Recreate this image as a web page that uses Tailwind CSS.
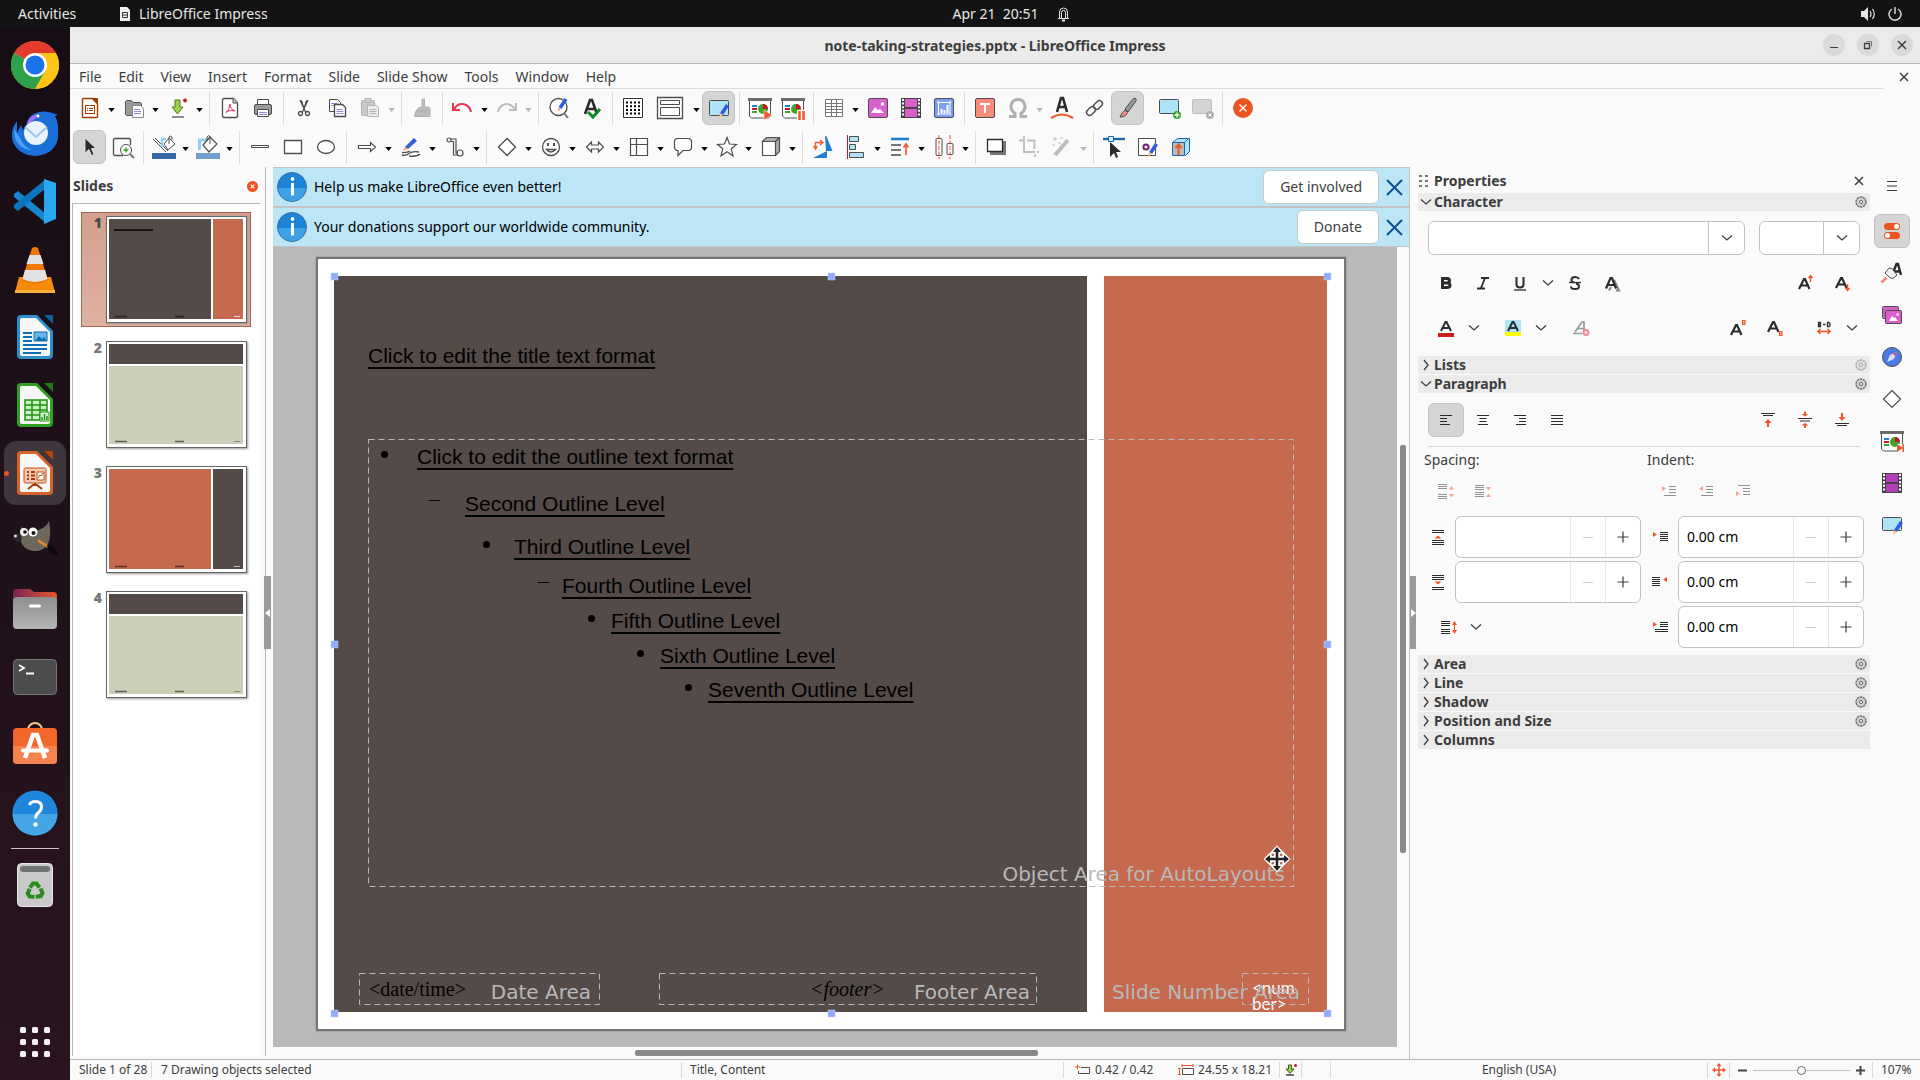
<!DOCTYPE html>
<html lang="en">
<head>
  <meta charset="UTF-8" />
  <meta name="viewport" content="width=device-width, initial-scale=1.0" />
  <title>note-taking-strategies.pptx - LibreOffice Impress</title>
  <script src="https://cdn.jsdelivr.net/npm/@tailwindcss/browser@4"></script>
</head>
<body class="h-screen flex flex-col overflow-hidden bg-[#fafafa] text-[#3d3d3d] text-[14px] leading-5 font-['Noto_Sans','Open_Sans',sans-serif]">

  <!-- Shared symbols -->
  <svg class="hidden">
    <symbol id="caret" viewBox="0 0 8 5"><path d="M0 0h8L4 5z" fill="currentColor"/></symbol>
    <symbol id="chev" viewBox="0 0 12 12"><path d="M1 3.500l5 4.500 5-4.500" fill="none" stroke="#3d3d3d" stroke-width="1.300"/></symbol>
    <symbol id="chevr" viewBox="0 0 12 12"><path d="M4 1l4 5-4 5" fill="none" stroke="#3d3d3d" stroke-width="1.300"/></symbol>
    <symbol id="x" viewBox="0 0 12 12"><path d="M2 2l8 8M10 2l-8 8" fill="none" stroke="currentColor" stroke-width="1.500"/></symbol>
    <symbol id="gear" viewBox="0 0 12 12"><circle cx="6" cy="6" r="5" fill="#cfcfcf" stroke="#6b6b6b" stroke-width="1.400" stroke-dasharray="2.4 0.7"/><circle cx="6" cy="6" r="1.600" fill="#eee" stroke="#6b6b6b"/></symbol>
    <symbol id="pencil" viewBox="0 0 12 16"><path d="M8 1l3 2-6 9-3-2z" fill="#2f5fe0"/><path d="M2 10l3 2-4 3z" fill="#f7b77a"/></symbol>
    <symbol id="board" viewBox="0 0 24 24"><path d="M0 2h24v3H0z" fill="#6b6b6b"/><path d="M1.500 5v15l2 2h17l2-2V5" fill="#fff" stroke="#4d4d4d"/><path d="M4 9h5v2H4z" fill="#1e7fd6"/><path d="M4 12h5v2H4z" fill="#c8142f"/><path d="M4 15h5v2H4z" fill="#3fa52a"/><circle cx="15" cy="13" r="5" fill="#3fa52a"/><path d="M15 13V8a5 5 0 0 1 5 5z" fill="#c8142f"/></symbol>
    <symbol id="film" viewBox="0 0 24 24"><path d="M2 2h20v20H2z" fill="#444"/><path d="M6 3h12v8H6zM6 13h12v8H6z" fill="var(--f)"/><path d="M4 3v18M20 3v18" stroke="#fff" stroke-width="2" stroke-dasharray="2 1.600"/></symbol>
  </svg>

  <!-- TOP BAR -->
  <header class="h-[27px] shrink-0 bg-[#131313] text-[#e6e6e6] grid grid-cols-3 items-center">
    <div class="flex items-center">
      <button class="pl-[18px] w-[119px] text-left">Activities</button>
      <svg class="w-3 h-4 mr-2" viewBox="0 0 12 16"><path d="M1 1h7l3 3v11H1z" fill="#f2f2f2"/><path d="M3.500 6.500h5v5h-5zM3.500 9h5" fill="none" stroke="#333"/></svg>
      <span>LibreOffice Impress</span>
    </div>
    <div class="flex items-center justify-center gap-[18px] pl-[102px]">
      <span class="whitespace-pre">Apr 21  20:51</span>
      <svg class="w-[13px] h-4" viewBox="0 0 13 16" fill="none" stroke="#e6e6e6"><path d="M1 12.500h11M2.500 12V6a4 4 0 0 1 8 0v6M4.500 12V6.500a2 2 0 0 1 4 0V12"/><path d="M5 14.500h3" stroke-width="2"/></svg>
    </div>
    <div class="flex items-center justify-end gap-3 pr-[18px]">
      <svg class="w-[15px] h-[14px]" viewBox="0 0 15 14"><path d="M0 4h3l4-4v14L3 10H0z" fill="#e6e6e6"/><path d="M9 4q2 3 0 6M11.500 2q3.500 5 0 10" fill="none" stroke="#e6e6e6" stroke-width="1.200"/></svg>
      <svg class="size-[14px]" viewBox="0 0 14 14" fill="none" stroke="#e6e6e6" stroke-width="1.400"><path d="M4 2a6 6 0 1 0 6 0M7 0v7"/></svg>
    </div>
  </header>

  <div class="flex-1 min-h-0 flex">

    <!-- DOCK -->
    <nav class="w-[70px] shrink-0 bg-[#1b0f17] bg-linear-to-b from-[#170d15] to-[#29141f] flex flex-col items-center pt-[5px] pb-[3px] [&>button]:w-[62px] [&>button]:h-16 [&>button]:mt-px [&>button]:mb-[3px] [&>button]:shrink-0 [&>button]:grid [&>button]:place-items-center [&>button>svg]:size-12">
      <button aria-label="Chrome"><svg viewBox="0 0 48 48"><circle cx="24" cy="24" r="24" fill="#fbbc05"/><path d="M24 24L3.200 12A24 24 0 0 1 44.800 12z" fill="#e33b2e"/><path d="M3.200 12A24 24 0 0 0 24 48l10.500-18z" fill="#2da14c"/><path d="M24 24l0-12h20.800A24 24 0 0 1 24 48l10.400-18z" fill="#fdc316"/><circle cx="24" cy="24" r="12" fill="#fff"/><circle cx="24" cy="24" r="9.500" fill="#1a73e8"/></svg></button>
      <button aria-label="Thunderbird"><svg viewBox="0 0 48 48"><path d="M6 12Q0 20 1 28a23 20 0 0 0 46-2q1-12-3-19l3-1Q34 0 25 4q-8 3-9 10l-4 7-2-5-4 8z" fill="#1a6fd8"/><path d="M16 14q3-8 12-9-3 4-10 10z" fill="#a46ff0"/><path d="M3 20q0 20 18 21-9-4-12-12z" fill="#4aa3f5"/><circle cx="25" cy="24" r="12" fill="#e8f3fc"/><path d="M14 18l11 10 11-10" fill="none" stroke="#9cc6ee" stroke-width="2"/><circle cx="27" cy="7" r="1.500" fill="#fff"/></svg></button>
      <button aria-label="Visual Studio Code"><svg viewBox="0 0 48 48"><path d="M3 17l4-3 28 23v9L3 20z" fill="#1687d0"/><path d="M3 31l4 3 28-23V2L3 28z" fill="#0a75bd"/><path d="M33 2l12 4v36l-12 5z" fill="#2ba6f0"/></svg></button>
      <button aria-label="VLC"><svg viewBox="0 0 48 48"><path d="M8 32h32l4 15H4z" fill="#f58a0b"/><path d="M4 45h40v3H4z" fill="#ffb03a"/><path d="M21 3q3-2 6 0l10 32q-13 8-26 0z" fill="#f07a00"/><path d="M18.500 10h11l3 9h-17zM14 25h20l2.500 9q-12.500 6-25 0z" fill="#e2e2e2"/></svg></button>
      <button aria-label="Writer"><svg viewBox="0 0 48 48"><path d="M10 2h16l16 16v24a4 4 0 0 1-4 4H10a4 4 0 0 1-4-4V6a4 4 0 0 1 4-4z" fill="#2b8fce"/><path d="M33 2h9v9z" fill="#0e6195"/><path d="M9 7q0-2 2-2h14l14 14v22q0 2-2 2H11q-2 0-2-2z" fill="#f6f6f6"/><path d="M12 20h9M12 24h9M12 28h9M12 32h24M12 36h24M12 40h18" stroke="#0d6fb0" stroke-width="2"/><path d="M23 19h13v9H23z" fill="#69b4e3" stroke="#0d6fb0"/><path d="M24 28l4-5 3 3 2-2 3 4z" fill="#0d6fb0"/></svg></button>
      <button aria-label="Calc"><svg viewBox="0 0 48 48"><path d="M10 2h16l16 16v24a4 4 0 0 1-4 4H10a4 4 0 0 1-4-4V6a4 4 0 0 1 4-4z" fill="#2fa01f"/><path d="M33 2h9v9z" fill="#1b7d10"/><path d="M9 7q0-2 2-2h14l14 14v22q0 2-2 2H11q-2 0-2-2z" fill="#f6f6f6"/><path d="M14 19h22v20H14zM14 24h22M14 29h22M14 34h22M21 19v20M29 19v20" fill="#c9efc2" stroke="#1f9210" stroke-width="1.500"/><path d="M29 31h9v9h-9z" fill="#d4f3ce" stroke="#1f9210"/><path d="M31 39v-3M33.500 39v-6M36 39v-4" stroke="#1f9210" stroke-width="1.500"/></svg></button>
      <button aria-label="Impress" class="relative rounded-xl bg-[#3f353d]"><span class="absolute left-0 size-[5px] rounded-full bg-[#e95420]"></span><svg viewBox="0 0 48 48"><path d="M10 2h16l16 16v24a4 4 0 0 1-4 4H10a4 4 0 0 1-4-4V6a4 4 0 0 1 4-4z" fill="#d9622b"/><path d="M33 2h9v9z" fill="#b0430f"/><path d="M9 7q0-2 2-2h14l14 14v22q0 2-2 2H11q-2 0-2-2z" fill="#f8f8f8"/><rect x="13" y="19" width="22" height="15" rx="1.500" fill="#f6c7ae" stroke="#c0501a"/><path d="M16 23h2M16 26.500h2M16 30h2M20 23h4M20 26.500h4M20 30h4" stroke="#a23c0b" stroke-width="1.800"/><path d="M26 23h7v8h-7zM27 29l2-3 1 1 2-3" fill="#fff" stroke="#c0501a"/><path d="M24 34v3M17 40l5-4h4l5 4" fill="none" stroke="#a23c0b" stroke-width="2"/></svg></button>
      <button aria-label="GIMP"><svg viewBox="0 0 48 48"><path d="M10 10q7 5 12 4Q34 13 38 4q3 14-1 23-5 8-15 7-10-2-12-9z" fill="#6e675b"/><path d="M2 18q4-4 8 0 2 6-2 7-6 0-6-7z" fill="#26282b"/><circle cx="13" cy="15" r="4" fill="#eee"/><circle cx="14" cy="15" r="1.800" fill="#111"/><circle cx="22" cy="15" r="4.500" fill="#fff"/><circle cx="22.500" cy="16" r="2" fill="#111"/><path d="M27 22l13 8-2 2-11-7z" fill="#e08a2c"/><path d="M36 28l4 0q6 4 8 11-8-2-11-6z" fill="#0b0b0b"/><circle cx="4.500" cy="19" r="1.500" fill="#ddd"/></svg></button>
      <button aria-label="Files"><svg viewBox="0 0 48 48"><defs><linearGradient id="g1"><stop offset="0" stop-color="#7a2453"/><stop offset="1" stop-color="#e8572a"/></linearGradient><linearGradient id="g2" x2="0" y2="1"><stop offset="0" stop-color="#8f8f8f"/><stop offset="1" stop-color="#b5b5b5"/></linearGradient></defs><path d="M2 8a4 4 0 0 1 4-4h13l4 3h19a4 4 0 0 1 4 4v9H2z" fill="url(#g1)"/><rect x="2" y="12" width="44" height="32" rx="4" fill="url(#g2)"/><path d="M19.500 21h9" stroke="#fff" stroke-width="3" stroke-linecap="round"/></svg></button>
      <button aria-label="Terminal"><svg viewBox="0 0 48 48"><rect x="2.500" y="6.500" width="43" height="35" rx="4" fill="#4c4c4c" stroke="#777"/><path d="M8 12l5 3-5 3M15 20.500h8" fill="none" stroke="#fff" stroke-width="1.800"/></svg></button>
      <button aria-label="Software"><svg viewBox="0 0 48 48"><path d="M17 9a7 7 0 0 1 14 0" fill="none" stroke="#f4c98d" stroke-width="2"/><rect x="2" y="7" width="44" height="36" rx="4" fill="#f2662a"/><path d="M2 25h44v14a4 4 0 0 1-4 4H6a4 4 0 0 1-4-4z" fill="#f58350"/><path d="M14 37l8-23h4l8 23" fill="none" stroke="#fff" stroke-width="4.500"/><path d="M12 29.500h24" stroke="#fff" stroke-width="4" stroke-linecap="round"/></svg></button>
      <button aria-label="Help"><svg viewBox="0 0 48 48"><circle cx="24" cy="24" r="22.500" fill="#1f86dc"/><path d="M1.500 25h45a22.500 21.500 0 0 1-45 0z" fill="#43a5e6"/><path d="M18.500 16q1-3.500 6-3.500 6 0 6 5.500 0 3-3 5.500-3 2.500-3 6" fill="none" stroke="#fff" stroke-width="3"/><circle cx="24.500" cy="35.500" r="2.300" fill="#fff"/></svg></button>
      <div class="w-12 h-px bg-[#c9c4c7] mb-[3px] shrink-0"></div>
      <button aria-label="Trash"><svg viewBox="0 0 48 48"><rect x="6.500" y="2.500" width="35" height="43" rx="4" fill="#c9c9c9" stroke="#e8e8e8"/><rect x="9" y="5" width="30" height="6" rx="3" fill="#6f7470"/><g transform="translate(24 30)" fill="none" stroke="#2b8a1f" stroke-width="4"><path d="M-5-3.500l3-4h3.500l3 4"/><path d="M-5-3.500l3-4h3.500l3 4" transform="rotate(120)"/><path d="M-5-3.500l3-4h3.500l3 4" transform="rotate(240)"/></g></svg></button>
      <button aria-label="Show Applications" class="mt-auto!"><svg viewBox="0 0 48 48" fill="#f2f2f2"><rect x="9" y="9" width="6" height="6" rx="1.500"/><rect x="21" y="9" width="6" height="6" rx="1.500"/><rect x="33" y="9" width="6" height="6" rx="1.500"/><rect x="9" y="21" width="6" height="6" rx="1.500"/><rect x="21" y="21" width="6" height="6" rx="1.500"/><rect x="33" y="21" width="6" height="6" rx="1.500"/><rect x="9" y="33" width="6" height="6" rx="1.500"/><rect x="21" y="33" width="6" height="6" rx="1.500"/><rect x="33" y="33" width="6" height="6" rx="1.500"/></svg></button>
    </nav>

    <!-- WINDOW -->
    <main class="flex-1 min-w-0 flex flex-col">

      <!-- Title bar -->
      <div class="h-[37px] shrink-0 bg-[#ebebeb] border-b border-[#b9b9b9] grid grid-cols-[1fr_auto_1fr] items-center">
        <h1 class="col-start-2 font-bold pt-px">note-taking-strategies.pptx - LibreOffice Impress</h1>
        <div class="flex justify-end gap-3 pr-[7px] [&>button]:size-[22px] [&>button]:rounded-full [&>button]:bg-[#dadada] [&>button]:grid [&>button]:place-items-center [&_svg]:size-3">
          <button aria-label="Minimize"><svg viewBox="0 0 12 12"><path d="M2 8.500h8" stroke="#3d3d3d"/></svg></button>
          <button aria-label="Restore"><svg viewBox="0 0 12 12" fill="none" stroke="#3d3d3d"><path d="M2.500 4.500h5v5h-5z" stroke-width="1.300"/><path d="M4.500 2.500h5v5" stroke="#777"/></svg></button>
          <button aria-label="Close"><svg><use href="#x"/></svg></button>
        </div>
      </div>

      <!-- Menu bar -->
      <div class="h-[25px] shrink-0 flex items-center justify-between pr-[10px]">
        <div class="flex-1 h-full border-b border-[#dcdcdc] flex items-center gap-[17px] pl-[9px] pt-px mr-[14px]">
          <button>File</button><button>Edit</button><button>View</button><button>Insert</button><button>Format</button><button>Slide</button><button>Slide Show</button><button>Tools</button><button>Window</button><button>Help</button>
        </div>
        <button aria-label="Close document"><svg class="size-3"><use href="#x"/></svg></button>
      </div>

      <!-- Standard toolbar -->
      <div class="h-[39px] shrink-0 flex items-center pl-[3px] pb-px text-black [&>button]:w-[33px] [&>button]:h-[34px] [&>button]:grid [&>button]:place-items-center [&>button]:shrink-0 [&>button>svg]:size-6 [&>.dd]:w-[11px] [&>.dd>svg]:w-[7px] [&>.dd>svg]:h-1 [&>.dd>svg]:mt-[3px] [&>i]:w-px [&>i]:h-[33px] [&>i]:ml-1 [&>i]:mr-[3px] [&>i]:bg-[#dcdcdc]">
        <button aria-label="New"><svg viewBox="0 0 24 24"><path d="M4.500 3.500q0-1 1-1h9l5 5v13q0 1-1 1h-13q-1 0-1-1z" fill="#fff" stroke="#a33e03" stroke-width="1.400"/><path d="M13 2h7v7z" fill="#a33e03"/><rect x="7.500" y="9.500" width="9" height="8" fill="none" stroke="#a33e03"/><path d="M9 12.500h1M11 12.500h4M9 14.500h1M11 14.500h4" stroke="#a33e03"/></svg></button>
        <button class="dd" aria-label="New options"><svg><use href="#caret"/></svg></button>
        <button aria-label="Open"><svg viewBox="0 0 24 24"><path d="M3.500 5.500l1-1h5l2 2h7l1 1v12h-15l-1-1z" fill="#9a9a9a" stroke="#555"/><path d="M10.500 9.500h8l3 3v9h-11z" fill="#fff" stroke="#888"/><path d="M12 13.500h6M12 15.500h7M12 17.500h7" stroke="#8d8de0"/></svg></button>
        <button class="dd" aria-label="Open options"><svg><use href="#caret"/></svg></button>
        <button aria-label="Save"><svg viewBox="0 0 24 24"><path d="M9 4h5v7h3l-5.500 7L6 11h3z" fill="#9bd24a" stroke="#4d7a1a"/><path d="M6 21h12" stroke="#555" stroke-width="1.300"/><circle cx="19" cy="4.500" r="2" fill="#c8142f"/></svg></button>
        <button class="dd" aria-label="Save options"><svg><use href="#caret"/></svg></button>
        <i></i>
        <button aria-label="Export as PDF"><svg viewBox="0 0 24 24"><path d="M4.500 3.500l1-1h10l4 4v14l-1 1h-13l-1-1z" fill="#fff" stroke="#4d4d4d" stroke-width="1.300"/><path d="M15 2v5h5" fill="#ccc" stroke="#4d4d4d"/><path d="M12 8q-.5 6-4 9M12 8q0 5 5 7M8 16q5-3 9-1" fill="none" stroke="#e8365d"/></svg></button>
        <button aria-label="Print"><svg viewBox="0 0 24 24"><path d="M6.500 8V3.500h11V8" fill="#fff" stroke="#4d4d4d"/><rect x="3.500" y="8.500" width="17" height="10" rx="1.500" fill="#9a9a9a" stroke="#4d4d4d"/><path d="M6.500 13.500h11v7h-11z" fill="#fff" stroke="#4d4d4d"/><path d="M8 16.500h8M8 18.500h8" stroke="#8d8de0"/></svg></button>
        <i></i>
        <button aria-label="Cut"><svg viewBox="0 0 24 24" fill="none" stroke="#4d4d4d" stroke-width="1.300"><path d="M8 4l5.500 12M16 4l-5.500 12M9.500 4.500L12 13M14.500 4.500L12 13"/><circle cx="8.500" cy="17.500" r="2"/><circle cx="15.500" cy="17.500" r="2"/></svg></button>
        <button aria-label="Copy"><svg viewBox="0 0 24 24" fill="#fff" stroke="#4d4d4d"><path d="M4.500 3.500h8l3 3v9h-11z"/><path d="M6 7.500h6M6 9.500h4" stroke="#8d8de0"/><path d="M9.500 8.500h8l3 3v9h-11z" stroke-width="1.300"/><path d="M11.500 13.500h6M11.500 15.500h7M11.500 17.500h7" stroke="#8d8de0"/></svg></button>
        <button aria-label="Paste"><svg viewBox="0 0 24 24" fill="#c9c9c9" stroke="#b5b5b5"><rect x="3.500" y="4.500" width="13" height="15" rx="1"/><path d="M7 2.500h6v4H7z"/><path d="M9.500 9.500h9l2 2v9h-11z" fill="#ececec"/><path d="M11.500 13.500h7M11.500 15.500h7M11.500 17.500h7"/></svg></button>
        <button class="dd text-[#b5b5b5]" aria-label="Paste options"><svg><use href="#caret"/></svg></button>
        <i></i>
        <button aria-label="Clone formatting"><svg viewBox="0 0 24 24"><path d="M12 3h2.500v8h3.500q2 0 2 2v2H6q2-4 6-4z" fill="#bcbcbc" stroke="#b0b0b0"/><path d="M6 15h14v5.500H4.500z" fill="#bcbcbc" stroke="#b0b0b0"/></svg></button>
        <i></i>
        <button aria-label="Undo"><svg viewBox="0 0 24 24" fill="none" stroke="#e8344e" stroke-width="2"><path d="M2 7v7h7M3 13q5-7 12-4 4 2 5 7"/></svg></button>
        <button class="dd" aria-label="Undo options"><svg><use href="#caret"/></svg></button>
        <button aria-label="Redo"><svg viewBox="0 0 24 24" fill="none" stroke="#bdbdbd" stroke-width="2"><path d="M21 7v7h-7M20 13q-5-7-12-4-4 2-5 7"/></svg></button>
        <button class="dd text-[#b5b5b5]" aria-label="Redo options"><svg><use href="#caret"/></svg></button>
        <i></i>
        <button aria-label="Find and replace"><svg viewBox="0 0 24 24" fill="none" stroke="#4d4d4d" stroke-width="1.300"><circle cx="11.500" cy="11" r="8.500" fill="#fff"/><path d="M17 17l4 5" stroke="#777" stroke-width="2"/><path d="M13 12l6-9" stroke="#2f5fe0" stroke-width="3.500"/><path d="M11.500 14.500l1.500-2.500" stroke="#f2a765" stroke-width="2"/></svg></button>
        <button aria-label="Spelling"><svg viewBox="0 0 24 24" fill="none"><path d="M5 18l5-14h2l5 14M7 13h8" stroke="#2b2b2b" stroke-width="2.600"/><path d="M8 16l5 5 7-8" stroke="#0f8a1f" stroke-width="3"/></svg></button>
        <i></i>
        <button aria-label="Display grid"><svg viewBox="0 0 24 24"><path d="M2.500 2.500h19v19h-19z" fill="#fff" stroke="#333"/><path d="M5 6.500h15M5 10.200h15M5 13.900h15M5 17.600h15" stroke="#000" stroke-width="2" stroke-dasharray="2 2"/></svg></button>
        <button aria-label="Display views" class="w-[42px]!"><svg class="w-7!" viewBox="0 0 28 24" fill="#fff" stroke="#4d4d4d"><path d="M1.500 1.500h25v21h-25z" stroke-width="1.300"/><path d="M4.500 4.500h19v4h-19zM4.500 11.500h19v8h-19z"/></svg></button>
        <button class="dd" aria-label="View options"><svg><use href="#caret"/></svg></button>
        <button aria-label="Master slide" class="bg-[#d5d5d5] border border-[#c3c3c3] rounded-md"><svg viewBox="0 0 24 24"><rect x="2.500" y="4.500" width="19" height="15" rx="1" fill="#aee3f8" stroke="#4d4d4d"/><use href="#pencil" x="11" y="7" width="12" height="16"/></svg></button>
        <i></i>
        <button aria-label="Start from first slide"><svg viewBox="0 0 24 24"><use href="#board"/><path d="M16 14l8 5-8 5z" fill="#f0552b" stroke="#fff" stroke-width=".5"/></svg></button>
        <button aria-label="Start from current slide"><svg viewBox="0 0 24 24"><use href="#board"/><path d="M16 14h9v10h-9z" fill="#fff"/><path d="M18.500 15v9M22.500 15v9" stroke="#f0552b" stroke-width="2.500"/></svg></button>
        <i></i>
        <button aria-label="Table"><svg viewBox="0 0 24 24" fill="#fff" stroke="#777"><path d="M3.500 3.500h17v17h-17zM3.500 7.500h17M3.500 10.500h17M3.500 13.500h17M3.500 16.500h17M9.500 3.500v17M14.500 3.500v17"/></svg></button>
        <button class="dd" aria-label="Table options"><svg><use href="#caret"/></svg></button>
        <button aria-label="Image"><svg viewBox="0 0 24 24"><rect x="2.500" y="2.500" width="19" height="19" rx="1.500" fill="#d95fcb" stroke="#4d4d4d"/><path d="M5 17l4-6 3 3 2-1 4 4z" fill="#fff"/><circle cx="16.500" cy="8" r="1.800" fill="#fff"/></svg></button>
        <button aria-label="Media"><svg viewBox="0 0 24 24" class="[--f:#d95fcb]"><use href="#film"/></svg></button>
        <button aria-label="Chart"><svg viewBox="0 0 24 24"><rect x="2.500" y="2.500" width="19" height="19" rx="1.500" fill="#7d9ff5" stroke="#4d4d4d"/><path d="M5 6.500h14M6.500 5v14M5 18h14M18 5v13" stroke="#fff" fill="none"/><path d="M9.500 17v-4M12.500 17v-3M15.500 17V9" stroke="#fff" stroke-width="2"/></svg></button>
        <i></i>
        <button aria-label="Text box"><svg viewBox="0 0 24 24"><rect x="2.500" y="2.500" width="19" height="19" rx="1.500" fill="#fa8b7a" stroke="#4d4d4d"/><path d="M7 8h10M12 8v9" stroke="#fff" stroke-width="2"/></svg></button>
        <button aria-label="Special character"><svg viewBox="0 0 24 24"><path d="M3 20.500h6v-3Q4.500 14 5 10q.8-6.500 7-6.500T19 10q.5 4-4 7.500v3h6" fill="none" stroke="#b0b0b0" stroke-width="3"/></svg></button>
        <button class="dd text-[#b5b5b5]" aria-label="Special character options"><svg><use href="#caret"/></svg></button>
        <button aria-label="Fontwork"><svg viewBox="0 0 24 24" fill="none"><path d="M7 16l4-14h2l4 14M9 11h6.500" stroke="#2b2b2b" stroke-width="2.600"/><path d="M1 22q11-7 22 0" stroke="#f0552b" stroke-width="2.200"/></svg></button>
        <button aria-label="Hyperlink"><svg viewBox="0 0 24 24" fill="none" stroke="#4d4d4d" stroke-width="1.400"><rect x="3" y="12" width="10" height="6" rx="3" transform="rotate(-45 8 15)"/><rect x="10" y="6" width="10" height="6" rx="3" transform="rotate(-45 15 9)"/></svg></button>
        <button aria-label="Show draw functions" class="bg-[#d5d5d5] border border-[#c3c3c3] rounded-md"><svg viewBox="0 0 24 24"><path d="M19 2q2 1 1 3l-8 11-3-3 8-10z" fill="#999" stroke="#4d4d4d"/><path d="M9 14l2.500 2.500Q10 21 4 21q2-5 5-7z" fill="#fa8b7a" stroke="#4d4d4d"/></svg></button>
        <button aria-label="New slide" class="ml-2"><svg viewBox="0 0 24 24"><rect x="2.500" y="3.500" width="19" height="14" rx="1" fill="#aee3f8" stroke="#4d4d4d"/><circle cx="20" cy="19" r="4" fill="#3fa52a"/><path d="M20 16.500v5M17.500 19h5" stroke="#fff" stroke-width="1.300"/></svg></button>
        <button aria-label="Delete slide"><svg viewBox="0 0 24 24"><rect x="2.500" y="3.500" width="19" height="14" rx="1" fill="#d4d4d4" stroke="#bcbcbc"/><circle cx="20" cy="19" r="4" fill="#b0b0b0"/><path d="M18.500 17.500l3 3M21.500 17.500l-3 3" stroke="#fff"/></svg></button>
        <i></i>
        <button aria-label="Close master view"><svg viewBox="0 0 24 24"><circle cx="12" cy="12" r="10" fill="#e95420"/><path d="M8.500 8.500l7 7M15.500 8.500l-7 7" stroke="#fff" stroke-width="1.300"/></svg></button>
      </div>

      <!-- Drawing toolbar -->
      <div class="h-[39px] shrink-0 flex items-center pl-[3px] pb-px text-black [&>button]:w-[33px] [&>button]:h-[34px] [&>button]:grid [&>button]:place-items-center [&>button]:shrink-0 [&>button>svg]:size-6 [&>.dd]:w-[11px] [&>.dd>svg]:w-[7px] [&>.dd>svg]:h-1 [&>.dd>svg]:mt-[3px] [&>i]:w-px [&>i]:h-[33px] [&>i]:ml-1 [&>i]:mr-[3px] [&>i]:bg-[#dcdcdc]">
        <button aria-label="Select" class="bg-[#d5d5d5] border border-[#c3c3c3] rounded-md"><svg viewBox="0 0 24 24"><path d="M7 3v15l4-3.500 2.500 6 2.500-1-2.500-6H18z" fill="#2b2b2b" stroke="#eee" stroke-width=".8"/></svg></button>
        <button aria-label="Zoom"><svg viewBox="0 0 24 24" fill="none" stroke="#4d4d4d"><path d="M12 20.500H3.500l-1-1v-15l1-1h15l1 1V10" stroke-width="1.300"/><circle cx="15" cy="15" r="5.500" fill="#fff"/><path d="M19 19l4 4" stroke="#777" stroke-width="2"/><path d="M15 12.500v5M12.500 15h5" stroke="#3fa52a" stroke-width="1.600"/></svg></button>
        <i></i>
        <button aria-label="Line color"><svg viewBox="0 0 24 24" fill="none" stroke="#4d4d4d"><path d="M0 18h24v6H0z" fill="#3465a4" stroke="none"/><path d="M1 4l13 13M3 3l13 13" /><path d="M10 12V4h4" stroke="#8fd0ef" stroke-width="2.500"/><path d="M12 9l5-6 6 6-7 6z" fill="#fff"/><path d="M17 9V2q1-2 3 0v3"/></svg></button>
        <button class="dd" aria-label="Line color options"><svg><use href="#caret"/></svg></button>
        <button aria-label="Fill color"><svg viewBox="0 0 24 24" fill="none" stroke="#4d4d4d"><path d="M0 18h24v6H0z" fill="#729fcf" stroke="none"/><path d="M3.500 15V5h8" stroke="#8fd0ef" stroke-width="3"/><path d="M7 10l7-8 7 7-8 8z" fill="#fff" stroke-width="1.200"/><path d="M14 9V1.500q-2-2-3 .5v4"/></svg></button>
        <button class="dd" aria-label="Fill color options"><svg><use href="#caret"/></svg></button>
        <i></i>
        <button aria-label="Line"><svg viewBox="0 0 24 24"><path d="M3.500 10.500h17v2h-17z" fill="#fff" stroke="#4d4d4d"/></svg></button>
        <button aria-label="Rectangle"><svg viewBox="0 0 24 24"><path d="M3.500 5.500h17v13h-17z" fill="#fff" stroke="#4d4d4d" stroke-width="1.300"/></svg></button>
        <button aria-label="Ellipse"><svg viewBox="0 0 24 24"><ellipse cx="12" cy="12" rx="8.500" ry="6.500" fill="#fff" stroke="#4d4d4d" stroke-width="1.300"/></svg></button>
        <i></i>
        <button aria-label="Lines and arrows"><svg viewBox="0 0 24 24"><path d="M3.500 10.500h12v-3l5 4.500-5 4.500v-3h-12z" fill="#fff" stroke="#4d4d4d" stroke-width="1.200"/></svg></button>
        <button class="dd" aria-label="Lines options"><svg><use href="#caret"/></svg></button>
        <button aria-label="Curves and polygons"><svg viewBox="0 0 24 24" fill="none"><path d="M6 12l9-9 3 3-9 8z" fill="#2f5fe0"/><path d="M6 12l3 2-5 2z" fill="#f2a765"/><path d="M3 20q4 1 7-1.500t10-1.500M3 17.500q5 .5 8-1.500M10 21q8 1 11-2" stroke="#4d4d4d" stroke-width="1.300"/></svg></button>
        <button class="dd" aria-label="Curve options"><svg><use href="#caret"/></svg></button>
        <button aria-label="Connectors"><svg viewBox="0 0 24 24" fill="none" stroke="#4d4d4d" stroke-width="1.200"><circle cx="6" cy="5" r="2"/><circle cx="17" cy="18" r="3"/><path d="M8 4h5v14h2M8 6.500h2.500V20H15"/></svg></button>
        <button class="dd" aria-label="Connector options"><svg><use href="#caret"/></svg></button>
        <i></i>
        <button aria-label="Basic shapes"><svg viewBox="0 0 24 24"><path d="M12 3.500l8.500 8.500-8.500 8.500L3.500 12z" fill="#fff" stroke="#4d4d4d" stroke-width="1.300"/></svg></button>
        <button class="dd" aria-label="Basic shape options"><svg><use href="#caret"/></svg></button>
        <button aria-label="Symbol shapes"><svg viewBox="0 0 24 24" fill="#fff" stroke="#4d4d4d" stroke-width="1.300"><circle cx="12" cy="12" r="8.500"/><path d="M7.500 14.500q4.500 5 9 0z"/><path d="M9 8v3M15 8v3" stroke-width="2"/></svg></button>
        <button class="dd" aria-label="Symbol options"><svg><use href="#caret"/></svg></button>
        <button aria-label="Block arrows"><svg viewBox="0 0 24 24"><path d="M3.500 12l5-5v3h7V7l5 5-5 5v-3h-7v3z" fill="#fff" stroke="#4d4d4d" stroke-width="1.200"/></svg></button>
        <button class="dd" aria-label="Block arrow options"><svg><use href="#caret"/></svg></button>
        <button aria-label="Flowchart"><svg viewBox="0 0 24 24" fill="#fff" stroke="#4d4d4d" stroke-width="1.200"><path d="M3.500 3.500h17v17h-17zM3.500 9.500h17M9.500 3.500v17"/></svg></button>
        <button class="dd" aria-label="Flowchart options"><svg><use href="#caret"/></svg></button>
        <button aria-label="Callouts"><svg viewBox="0 0 24 24"><path d="M5.500 3.500h13l2 2v8l-2 2H12l-5 5v-5H5.500l-2-2v-8z" fill="#fff" stroke="#4d4d4d" stroke-width="1.200"/></svg></button>
        <button class="dd" aria-label="Callout options"><svg><use href="#caret"/></svg></button>
        <button aria-label="Stars and banners"><svg viewBox="0 0 24 24"><path d="M12 2.500l2.500 6.500 7 .5-5.300 4.300 1.800 7-6-4-6 4 1.800-7L2.500 9.500l7-.5z" fill="#fff" stroke="#4d4d4d" stroke-width="1.200"/></svg></button>
        <button class="dd" aria-label="Star options"><svg><use href="#caret"/></svg></button>
        <button aria-label="3D objects"><svg viewBox="0 0 24 24" stroke="#4d4d4d" stroke-width="1.200"><path d="M3.500 6.500l4-4h13v14l-4 4z" fill="#aaa"/><path d="M3.500 6.500h13v14h-13z" fill="#fff"/><path d="M16.500 6.500l4-4"/></svg></button>
        <button class="dd" aria-label="3D options"><svg><use href="#caret"/></svg></button>
        <i></i>
        <button aria-label="Rotate"><svg viewBox="0 0 24 24"><path d="M14 1q2 0 2.500 3l5 12H15zM2 23l14-7v7z" fill="#1e7fd6"/><path d="M4.500 13V7.500h6M2.500 11l2 3 2-3M9 5l3 2.500L9 10" fill="none" stroke="#f0552b" stroke-width="1.300"/></svg></button>
        <button aria-label="Align objects"><svg viewBox="0 0 24 24" fill="#aee3f8" stroke="#4d4d4d"><path d="M5.500 1.500h9v5h-9zM5.500 9.500h6v5h-6zM5.500 17.500h14v5h-14z"/><path d="M3.500 0v24" stroke="#c8142f"/></svg></button>
        <button class="dd" aria-label="Align options"><svg><use href="#caret"/></svg></button>
        <button aria-label="Arrange"><svg viewBox="0 0 24 24" fill="none"><path d="M3 4h18" stroke="#1e7fd6" stroke-width="2.600"/><path d="M3 10h10M3 15h10M3 20h10" stroke="#777" stroke-width="2"/><path d="M18 20v-9M15.500 12.500L18 9l2.500 3.500" stroke="#f0552b" stroke-width="1.600"/></svg></button>
        <button class="dd" aria-label="Arrange options"><svg><use href="#caret"/></svg></button>
        <button aria-label="Distribute"><svg viewBox="0 0 24 24" fill="#fff" stroke="#4d4d4d"><rect x="4" y="3.500" width="6" height="17" rx="1"/><rect x="15" y="8.500" width="6" height="11" rx="1"/><path d="M7 0v24M18 0v24" stroke="#f0552b" stroke-dasharray="4 1.500"/></svg></button>
        <button class="dd" aria-label="Distribute options"><svg><use href="#caret"/></svg></button>
        <i></i>
        <button aria-label="Shadow"><svg viewBox="0 0 24 24"><path d="M6 6h16v14H6z" fill="#777"/><path d="M3.500 4.500h15v12h-15z" fill="#fff" stroke="#2b2b2b" stroke-width="1.300"/></svg></button>
        <button aria-label="Crop"><svg viewBox="0 0 24 24" fill="none" stroke="#bdbdbd" stroke-width="1.800"><path d="M7 1v16h11M2 5.500h4M10 5.500h7.500V14M18 19v3M20 17h2"/></svg></button>
        <button aria-label="Filter"><svg viewBox="0 0 24 24" fill="none" stroke="#bdbdbd"><path d="M5 20L18 5" stroke-width="4"/><path d="M3 4h4M5 2v4M8 8h3M10 3h3M2 10h3"/></svg></button>
        <button class="dd text-[#b5b5b5]" aria-label="Filter options"><svg><use href="#caret"/></svg></button>
        <i></i>
        <button aria-label="Points"><svg viewBox="0 0 24 24"><path d="M1 4h22" stroke="#1a66a8" stroke-width="2.400"/><path d="M6.500 1.500h5v5h-5z" fill="#d5effb" stroke="#1a66a8"/><path d="M8 7v15l4-4 2 5 2-1-2-5h5z" fill="#2b2b2b"/></svg></button>
        <button aria-label="Gluepoints"><svg viewBox="0 0 24 24"><path d="M3.500 3.500h17v17h-17z" fill="#fff" stroke="#4d4d4d"/><circle cx="11" cy="12" r="2.600" fill="none" stroke="#76217a" stroke-width="2"/><use href="#pencil" x="12" y="7" width="12" height="16"/></svg></button>
        <button aria-label="Toggle extrusion"><svg viewBox="0 0 24 24" stroke="#1a66a8"><path d="M4.500 7.500l5-4h12v13l-4 4z" fill="#aee3f8"/><path d="M4.500 7.500h12v13h-12z" fill="#bbb"/><path d="M16.500 7.500l4-4"/><path d="M10.500 20v-9M7.500 13l3-3.500 3 3.500" fill="none" stroke="#f0552b" stroke-width="2"/></svg></button>
      </div>

      <!-- Work area -->
      <div class="flex-1 min-h-0 flex">

        <!-- Slide panel -->
        <section class="w-[203px] shrink-0 flex relative">
          <div class="w-[196px] border-r border-[#b5b5b5] mb-[3px] flex flex-col">
            <div class="h-[36px] flex items-center justify-between pt-[2px] pl-[3px] pr-[7px]">
              <h2 class="font-bold">Slides</h2>
              <button aria-label="Close pane"><svg class="size-[11px]" viewBox="0 0 12 12"><circle cx="6" cy="6" r="6" fill="#e95420"/><path d="M4 4l4 4M8 4l-4 4" stroke="#fff" stroke-width="1.200"/></svg></button>
            </div>
            <ol class="flex-1 ml-[2px] mr-[5px] bg-white border-l border-t border-[#b5b5b5] pt-2 font-bold text-[14px] leading-4 text-[#777] [&>li]:ml-2 [&>li]:mr-[9px] [&>li]:h-[115px] [&>li]:mb-[10px] [&>li]:flex [&>li]:border [&>li]:border-transparent [&_b]:w-[24px] [&_b]:pt-[2px] [&_b]:pr-[4px] [&_b]:text-right [&_b]:shrink-0 [&_.th]:relative [&_.th]:w-[141px] [&_.th]:h-[107px] [&_.th]:mt-[3px] [&_.th]:pt-[2px] [&_.th]:pl-[2px] [&_.th]:pr-[3px] [&_.th]:pb-[3px] [&_.th]:bg-white [&_.th]:border [&_.th]:border-[#666] [&_.th]:shadow-[1px_1px_2px_#999] [&_.th]:flex [&_.th]:gap-[2px]">
              <li class="bg-linear-to-b from-[#d2a08f] to-[#e0b0a0] border-[#a5644f]! text-[#4a4a4a]"><b>1</b>
                <div class="th"><div class="flex-1 bg-[#544a48] relative"><span class="absolute left-[5px] top-[10px] w-[39px] h-[2px] bg-[#191616]"></span></div><div class="w-[30px] bg-[#c5694f]"></div><svg class="absolute left-[8px] bottom-[4px] w-[126px] h-[3px]"><path d="M0 1.500h12M60 1.500h9" stroke="#2b2423" stroke-width="1.500"/><path d="M119 1.500h6" stroke="#ddd"/></svg></div></li>
              <li><b>2</b>
                <div class="th flex-col"><div class="h-[20px] bg-[#544a48]"></div><div class="flex-1 bg-[#cccfb8]"></div><svg class="absolute left-[8px] bottom-[4px] w-[126px] h-[3px]"><path d="M0 1.500h12M60 1.500h9" stroke="#5c5d55" stroke-width="1.500"/><path d="M119 1.500h6" stroke="#888"/></svg></div></li>
              <li><b>3</b>
                <div class="th"><div class="flex-1 bg-[#c5694f]"></div><div class="w-[30px] bg-[#544a48]"></div><svg class="absolute left-[8px] bottom-[4px] w-[126px] h-[3px]"><path d="M0 1.500h12M60 1.500h9" stroke="#5a3228" stroke-width="1.500"/><path d="M119 1.500h6" stroke="#bbb"/></svg></div></li>
              <li><b>4</b>
                <div class="th flex-col"><div class="h-[20px] bg-[#544a48]"></div><div class="flex-1 bg-[#cccfb8]"></div><svg class="absolute left-[8px] bottom-[4px] w-[126px] h-[3px]"><path d="M0 1.500h12M60 1.500h9" stroke="#5c5d55" stroke-width="1.500"/><path d="M119 1.500h6" stroke="#888"/></svg></div></li>
            </ol>
          </div>
          <button aria-label="Hide slide pane" class="absolute left-[194px] top-[409px] w-[7px] h-[73px] bg-[#9a9a9a] grid place-items-center"><svg class="w-[5px] h-2" viewBox="0 0 5 8"><path d="M5 0v8L0 4z" fill="#fff"/></svg></button>
        </section>

        <!-- Editor -->
        <section class="flex-1 min-w-0 flex flex-col">
          <div class="h-[41px] shrink-0 bg-[#bce5f6] border-t border-b-2 border-[#c3c3c3] text-black flex items-center pl-1 pr-[6px]">
            <svg class="size-[30px]" viewBox="0 0 30 30"><circle cx="15" cy="15" r="14.500" fill="#1c83d8" stroke="#3b6f98"/><path d="M1.500 16h27a13.500 13 0 0 1-27 0z" fill="#3fa2e4"/><circle cx="15.500" cy="7" r="1.900" fill="#fff"/><path d="M15.500 11v12.500" stroke="#fff" stroke-width="3"/></svg>
            <p class="ml-[7px] flex-1">Help us make LibreOffice even better!</p>
            <button class="h-[34px] px-4 bg-white border border-[#c9c9c9] rounded-md text-[#3d3d3d]">Get involved</button>
            <button aria-label="Dismiss" class="ml-[7px]"><svg class="size-[17px]" viewBox="0 0 17 17"><path d="M1 1l15 15M16 1L1 16" stroke="#0b4f8f" stroke-width="2"/></svg></button>
          </div>
          <div class="h-[39px] shrink-0 bg-[#bce5f6] border-b border-[#c3c3c3] text-black flex items-center pl-1 pr-[6px]">
            <svg class="size-[30px]" viewBox="0 0 30 30"><circle cx="15" cy="15" r="14.500" fill="#1c83d8" stroke="#3b6f98"/><path d="M1.500 16h27a13.500 13 0 0 1-27 0z" fill="#3fa2e4"/><circle cx="15.500" cy="7" r="1.900" fill="#fff"/><path d="M15.500 11v12.500" stroke="#fff" stroke-width="3"/></svg>
            <p class="ml-[7px] flex-1">Your donations support our worldwide community.</p>
            <button class="h-[34px] px-4 bg-white border border-[#c9c9c9] rounded-md text-[#3d3d3d]">Donate</button>
            <button aria-label="Dismiss" class="ml-[7px]"><svg class="size-[17px]" viewBox="0 0 17 17"><path d="M1 1l15 15M16 1L1 16" stroke="#0b4f8f" stroke-width="2"/></svg></button>
          </div>

          <div class="flex-1 min-h-0 flex">
            <!-- Canvas -->
            <div class="flex-1 bg-[#b9b9b9] pt-[10px] pl-[43px] pr-[51px]">
              <div class="relative w-full aspect-[1030/774] bg-white border-2 border-[#747474] shadow-[0_0_2px_#888] text-black">
                <div class="absolute left-[16px] top-[17px] w-[753px] h-[736px] bg-[#544a48]"></div>
                <div class="absolute left-[786px] top-[17px] w-[223px] h-[736px] bg-[#c5694f]"></div>

                <p class="absolute left-[50px] top-[83px] text-[21px] leading-7 font-['Liberation_Sans_Narrow','Arial_Narrow','Liberation_Sans',sans-serif] underline decoration-2 underline-offset-4 [text-decoration-skip-ink:none]">Click to edit the title text format</p>

                <ul class="absolute left-[50px] top-[184px] text-[21px] leading-7 font-['Liberation_Sans_Narrow','Arial_Narrow','Liberation_Sans',sans-serif] whitespace-nowrap [&>li]:relative [&_u]:decoration-2 [&_u]:underline-offset-4 [&_u]:[text-decoration-skip-ink:none] [&_i]:absolute [&_i]:top-[8px] [&_i]:size-[7px] [&_i]:rounded-full [&_i]:bg-black [&_s]:absolute [&_s]:top-[10px] [&_s]:w-[11px] [&_s]:h-px [&_s]:bg-black">
                  <li class="pl-[49px]"><i class="left-[13px]"></i><u>Click to edit the outline text format</u></li>
                  <li class="pl-[97px] mt-[19px]"><s class="left-[61px]"></s><u>Second Outline Level</u></li>
                  <li class="pl-[146px] mt-[15px]"><i class="left-[115px]"></i><u>Third Outline Level</u></li>
                  <li class="pl-[194px] mt-[11px]"><s class="left-[170px]"></s><u>Fourth Outline Level</u></li>
                  <li class="pl-[243px] mt-[7px]"><i class="left-[220px]"></i><u>Fifth Outline Level</u></li>
                  <li class="pl-[292px] mt-[7px]"><i class="left-[269px]"></i><u>Sixth Outline Level</u></li>
                  <li class="pl-[340px] mt-[6px]"><i class="left-[317px]"></i><u>Seventh Outline Level</u></li>
                </ul>

                <p class="absolute left-[51px] top-[718px] text-[20px] leading-6 font-['Liberation_Serif',serif]">&lt;date/time&gt;</p>
                <p class="absolute left-[492px] top-[718px] text-[20px] leading-6 italic font-['Liberation_Serif',serif]">&lt;footer&gt;</p>
                <p class="absolute left-[934px] top-[721px] text-[17px] leading-4 text-white font-[Lato,sans-serif]">&lt;num<br>ber&gt;</p>

                <!-- Placeholder areas -->
                <svg class="absolute inset-0 size-full" fill="none" stroke="#b9b9b9" stroke-dasharray="6 4">
                  <rect x="50.500" y="180.500" width="925" height="447"/>
                  <rect x="41.500" y="714.500" width="240" height="31"/>
                  <rect x="341.500" y="714.500" width="377" height="31"/>
                  <rect x="924.500" y="714.500" width="66" height="31"/>
                </svg>
                <div class="text-[20px] leading-6 font-['DejaVu_Sans',sans-serif] text-[#b9b9b9] whitespace-nowrap">
                  <p class="absolute right-[59px] top-[603px]">Object Area for AutoLayouts</p>
                  <p class="absolute right-[753px] top-[721px]">Date Area</p>
                  <p class="absolute right-[314px] top-[721px]">Footer Area</p>
                  <p class="absolute right-[44px] top-[721px]">Slide Number Area</p>
                </div>

                <!-- Selection handles and pointer -->
                <svg class="absolute inset-0 size-full overflow-visible" fill="#8fabfa" stroke="#c3d1fb" stroke-width=".5">
                  <path d="M13 14h7v7h-7zM510 14h7v7h-7zM1006 14h7v7h-7zM13 382h7v7h-7zM1006 382h7v7h-7zM13 751h7v7h-7zM510 751h7v7h-7zM1006 751h7v7h-7z"/>
                </svg>
                <svg class="absolute left-[945px] top-[586px] size-[28px]" viewBox="0 0 28 28"><path d="M14 .5L27.500 14 14 27.500.5 14z" fill="#fff"/><path d="M9 9h1.500v1.500H9zM17.500 9H19v1.500h-1.500zM9 17.500h1.500V19H9zM17.500 17.500H19V19h-1.500z" fill="#c5694f" stroke="#b06450"/><path d="M14 6v16M6 14h16" stroke="#222" stroke-width="2.500"/><path d="M14 2l4 5h-8zM14 26l4-5h-8zM2 14l5-4v8zM26 14l-5-4v8z" fill="#222"/></svg>
              </div>
            </div>
            <div class="w-3 shrink-0 pl-[3px] pt-[198px]"><div class="w-[6px] h-[408px] rounded-xs bg-[#898989]"></div></div>
          </div>
          <div class="h-3 shrink-0 pl-[362px] pt-[3px]"><div class="w-[403px] h-[6px] rounded-xs bg-[#898989]"></div></div>
        </section>

        <!-- Sidebar -->
        <aside class="w-[511px] shrink-0 border-l border-[#c3c3c3] flex relative pl-2">
          <button aria-label="Hide sidebar" class="absolute left-0 top-[409px] w-[6px] h-[73px] bg-[#9a9a9a] grid place-items-center"><svg class="w-[5px] h-2" viewBox="0 0 5 8"><path d="M0 0v8l5-4z" fill="#fff"/></svg></button>
          <div class="flex-1 min-w-0 [&>h3]:h-[18px] [&>h3]:mb-px [&>h3]:bg-[#ebebeb] [&>h3]:font-bold [&>h3]:flex [&>h3]:items-center [&>h3]:gap-[2px] [&>h3]:pl-[2px] [&>h3]:pr-[3px] [&>h3>svg]:size-3 [&>h3>svg:last-child]:ml-auto">
            <div class="h-[26px] flex items-center pt-[2px] pl-px">
              <svg class="w-[9px] h-3" viewBox="0 0 9 12" fill="#777"><path d="M0 0h3v2H0zM6 0h3v2H6zM0 5h3v2H0zM6 5h3v2H6zM0 10h3v2H0zM6 10h3v2H6z"/></svg>
              <h2 class="font-bold flex-1 pl-[6px]">Properties</h2>
              <button aria-label="Close sidebar" class="mr-[5px]"><svg class="size-3"><use href="#x"/></svg></button>
            </div>

            <h3><svg><use href="#chev"/></svg>Character<svg><use href="#gear"/></svg></h3>
            <div class="pt-[9px] pb-[11px] pl-[10px] pr-[10px] flex flex-col gap-[11px] [&_button]:w-[36px] [&_button]:h-[34px] [&_button]:grid [&_button]:place-items-center [&_button>svg]:size-5 [&_.dd]:w-[17px] [&_.dd>svg]:size-3">
              <div class="flex justify-between">
                <div class="flex w-[317px] h-[34px] bg-white border border-[#c3c3c3] rounded-md">
                  <input aria-label="Font name" class="flex-1 min-w-0 px-2 outline-none" />
                  <button aria-label="Font list" class="border-l border-[#c3c3c3] h-8! dd w-[36px]!"><svg><use href="#chev"/></svg></button>
                </div>
                <div class="flex w-[101px] h-[34px] bg-white border border-[#c3c3c3] rounded-md">
                  <input aria-label="Font size" class="flex-1 min-w-0 px-2 outline-none" />
                  <button aria-label="Size list" class="border-l border-[#c3c3c3] h-8! dd w-[36px]!"><svg><use href="#chev"/></svg></button>
                </div>
              </div>
              <div class="flex gap-px">
                <button aria-label="Bold"><svg viewBox="0 0 20 20" fill="none" stroke="#2b2b2b" stroke-width="3"><path d="M6.500 5.500v9H11q3 0 3-2.300T11 10q2.500-.3 2.500-2.300T11 5.500zM6.500 10H11"/></svg></button>
                <button aria-label="Italic"><svg viewBox="0 0 20 20" fill="none" stroke="#2b2b2b" stroke-width="1.800"><path d="M8 5h8M4 15.500h8M12 5l-4 10"/></svg></button>
                <button aria-label="Underline"><svg viewBox="0 0 20 20" fill="none" stroke="#2b2b2b" stroke-width="2"><path d="M6.500 4v7.500q0 3 3.500 3t3.500-3V4"/><path d="M4 17h12" stroke-width="1.300"/></svg></button>
                <button class="dd" aria-label="Underline options"><svg><use href="#chev"/></svg></button>
                <button aria-label="Strikethrough"><svg viewBox="0 0 20 20" fill="none" stroke="#2b2b2b" stroke-width="2"><path d="M14 6q-1-2-4-2T6.500 6.500 9 9.500M11 10.500q3 .5 3 3T10 16t-4-2.500"/><path d="M4 9.500h12" stroke-width="1.300"/></svg></button>
                <button aria-label="Shadow text"><svg viewBox="0 0 20 20" fill="none" stroke-width="2.200"><path d="M7 17.500l2-3.500M12 7l5 10.500h-3" stroke="#888"/><path d="M4 15.500L8.500 5h1.500L14 15.500M5.500 12h7" stroke="#2b2b2b"/></svg></button>
                <span class="flex-1"></span>
                <button aria-label="Increase font size"><svg viewBox="0 0 20 20" fill="none"><path d="M4 16L9 6h1l4.500 10M6 12.500h7" stroke="#2b2b2b" stroke-width="2.200"/><path d="M15.500 9V3M13.500 5l2-2.500 2 2.500" stroke="#f0552b" stroke-width="1.400"/></svg></button>
                <button aria-label="Decrease font size"><svg viewBox="0 0 20 20" fill="none"><path d="M4 15L9 5h1l4.500 10M6 11.500h7" stroke="#2b2b2b" stroke-width="2.200"/><path d="M15.500 11v6M13.500 15l2 2.500 2-2.500" stroke="#f0552b" stroke-width="1.400"/></svg></button>
              </div>
              <div class="flex gap-px">
                <button aria-label="Font color"><svg viewBox="0 0 20 20" fill="none"><path d="M5 13l4.500-9h1L15 13M7 10h6" stroke="#2b2b2b" stroke-width="2"/><path d="M2 15h16v4H2z" fill="#c9211e"/></svg></button>
                <button class="dd" aria-label="Font color options"><svg><use href="#chev"/></svg></button>
                <button aria-label="Highlight color" class="ml-3"><svg viewBox="0 0 20 20" fill="none"><path d="M2 3q0-1 1-1h14q1 0 1 1v12H2z" fill="#aee3f8"/><path d="M5 13l4.500-9h1L15 13M7 10h6" stroke="#2b2b2b" stroke-width="2"/><path d="M2 14h16v4H2z" fill="#ff0"/></svg></button>
                <button class="dd" aria-label="Highlight options"><svg><use href="#chev"/></svg></button>
                <button aria-label="Clear formatting" class="ml-[13px]"><svg viewBox="0 0 20 20" fill="none"><path d="M4 14l7-10h2v10M7 10.500h6M2 15.500h9" stroke="#999" stroke-width="1.700"/><circle cx="15" cy="14.500" r="3.500" fill="#f08a92"/><path d="M13.500 13l3 3M16.500 13l-3 3" stroke="#fff"/></svg></button>
                <span class="flex-1"></span>
                <button aria-label="Superscript"><svg viewBox="0 0 20 20" fill="none"><path d="M3 17L8 7h1l4.500 10M5 13.500h7" stroke="#2b2b2b" stroke-width="2.200"/><path d="M14.500 2.500H17v4h-2.500zM14.500 4.500H17" stroke="#f0552b" stroke-width="1.200"/></svg></button>
                <button aria-label="Subscript"><svg viewBox="0 0 20 20" fill="none"><path d="M3 14L8 4h1l4.500 10M5 10.500h7" stroke="#2b2b2b" stroke-width="2.200"/><path d="M14.500 13.500H17v4h-2.500zM14.500 15.500H17" stroke="#f0552b" stroke-width="1.200"/></svg></button>
                <button aria-label="Character spacing" class="ml-3"><svg viewBox="0 0 20 20" fill="none"><path d="M4.500 4.500h2v4h-2zM4.500 6.500h2M13.500 4.500H15l1 1v2l-1 1h-1.500zM9 6.500h2.500" stroke="#2b2b2b" stroke-width="1.300"/><path d="M4 13.500h12M6.500 11L4 13.500 6.500 16M13.500 11l2.500 2.500-2.500 2.500" stroke="#f0552b" stroke-width="1.600"/></svg></button>
                <button class="dd" aria-label="Spacing options"><svg><use href="#chev"/></svg></button>
              </div>
            </div>

            <h3><svg><use href="#chevr"/></svg>Lists<svg class="opacity-50"><use href="#gear"/></svg></h3>
            <h3><svg><use href="#chev"/></svg>Paragraph<svg><use href="#gear"/></svg></h3>
            <div class="flex gap-px pt-[9px] pb-[9px] ml-[10px] mr-[10px] border-b border-[#d8d8d8] [&>button]:w-[36px] [&>button]:h-[34px] [&>button]:grid [&>button]:place-items-center [&_svg]:size-5 [&_svg]:fill-none [&_svg]:stroke-[#2b2b2b]">
              <button aria-label="Align left" class="bg-[#d5d5d5] border border-[#c3c3c3] rounded-md"><svg viewBox="0 0 20 20"><path d="M4 5.500h12M4 8.500h7M4 11.500h7M4 14.500h10"/></svg></button>
              <button aria-label="Align center"><svg viewBox="0 0 20 20"><path d="M4 5.500h12M6.500 8.500h7M6.500 11.500h7M5 14.500h10"/></svg></button>
              <button aria-label="Align right"><svg viewBox="0 0 20 20"><path d="M4 5.500h12M9 8.500h7M9 11.500h7M6 14.500h10"/></svg></button>
              <button aria-label="Justify"><svg viewBox="0 0 20 20"><path d="M4 5.500h12M4 8.500h12M4 11.500h12M4 14.500h12"/></svg></button>
              <span class="flex-1"></span>
              <button aria-label="Align top"><svg viewBox="0 0 20 20"><path d="M3 3.500h14M5 5.500h10"/><path d="M10 17v-4" stroke="#f0552b" stroke-width="2" class="stroke-[#f0552b]"/><path d="M10 9l3.500 4h-7z" class="fill-[#f0552b] stroke-none"/></svg></button>
              <button aria-label="Center vertically"><svg viewBox="0 0 20 20"><path d="M3 8.500h14M5 11h10"/><path d="M10 6.500L6.500 4H9V1.500h2V4h2.500zM10 13l3.500 2.500H11V18H9v-2.500H6.500z" class="fill-[#f0552b] stroke-none"/></svg></button>
              <button aria-label="Align bottom"><svg viewBox="0 0 20 20"><path d="M3 13.500h14M5 15.500h10"/><path d="M10 3v4" stroke-width="2" class="stroke-[#f0552b]"/><path d="M10 11L6.500 7h7z" class="fill-[#f0552b] stroke-none"/></svg></button>
            </div>
            <div class="grid grid-cols-2 mr-[6px] pt-[3px] pb-[7px] gap-y-[3px] [&_.ic]:w-[37px] [&_.ic]:shrink-0 [&_.ic]:pl-[3px] [&_.ic]:grid [&_.ic]:place-items-center [&_.ic>svg]:size-5 [&_.sp]:flex [&_.sp]:flex-1 [&_.sp]:min-w-0 [&_.sp]:h-[42px] [&_.sp]:bg-white [&_.sp]:border [&_.sp]:border-[#c3c3c3] [&_.sp]:rounded-md [&_.sp]:text-black [&_.sp>button]:w-[35px] [&_.sp>button]:shrink-0 [&_.sp>button]:border-l [&_.sp>button]:border-[#e8e8e8] [&_.sp>button]:grid [&_.sp>button]:place-items-center [&_.sp_svg]:size-3">
              <span class="pl-[6px]">Spacing:</span><span class="pl-[6px]">Indent:</span>
              <div class="flex items-center h-[34px] pl-[18px] pt-[2px] gap-[17px] mb-[6px] opacity-50">
                <button aria-label="Increase paragraph spacing"><svg class="size-5" viewBox="0 0 20 20"><path d="M2 3.500h9M2 5.500h9M2 7.500h9M2 13.500h9M2 15.500h9M2 17.500h9" stroke="#2b2b2b"/><path d="M13 8.500h5L15.500 5zM13 13h5l-2.500 3.500z" fill="#f0552b"/></svg></button>
                <button aria-label="Decrease paragraph spacing"><svg class="size-5" viewBox="0 0 20 20"><path d="M2 4.500h9M2 6.500h9M2 8.500h9M2 11.500h9M2 13.500h9M2 15.500h9" stroke="#2b2b2b"/><path d="M13 6h5l-2.500 3.500zM13 16h5l-2.500-3.500z" fill="#f0552b"/></svg></button>
              </div>
              <div class="flex items-center h-[34px] pl-[18px] pt-[2px] gap-[17px] mb-[6px] opacity-50">
                <button aria-label="Increase indent"><svg class="size-5" viewBox="0 0 20 20"><path d="M10 5.500h7M10 8.500h7M10 11.500h7M5 14.500h12" stroke="#2b2b2b"/><path d="M3 5v5l4-2.500z" fill="#f0552b"/></svg></button>
                <button aria-label="Decrease indent"><svg class="size-5" viewBox="0 0 20 20"><path d="M10 5.500h7M10 8.500h7M10 11.500h7M5 14.500h12" stroke="#2b2b2b"/><path d="M7 5v5L3 7.500z" fill="#f0552b"/></svg></button>
                <button aria-label="Hanging indent"><svg class="size-5" viewBox="0 0 20 20"><path d="M5 4.500h12M10 7.500h7M10 10.500h7M10 13.500h7" stroke="#2b2b2b"/><path d="M3 10v5l4-2.500z" fill="#f0552b"/></svg></button>
              </div>
              <div class="flex"><label for="above" class="ic" aria-label="Above spacing"><svg viewBox="0 0 20 20"><path d="M4 3.500h12M4 5.500h12M4 13.500h12M4 15.500h12M4 17.500h12" stroke="#2b2b2b"/><path d="M6.500 11.500h7L10 8.500z" fill="#f0552b"/></svg></label><div class="sp"><input id="above" class="flex-1 min-w-0 px-2 outline-none" /><button aria-label="Decrease"><svg viewBox="0 0 12 12"><path d="M1 6.500h10" stroke="#ccc"/></svg></button><button aria-label="Increase"><svg viewBox="0 0 12 12"><path d="M.5 6h11M6 .5v11" stroke="#3d3d3d" stroke-width="1.200"/></svg></button></div></div>
              <div class="flex"><label for="before" class="ic" aria-label="Before text indent"><svg viewBox="0 0 20 20"><path d="M9 5.500h8M9 7.500h8M9 9.500h8M9 11.500h8M9 13.500h8" stroke="#2b2b2b"/><path d="M2 5v5l4-2.500z" fill="#f0552b"/></svg></label><div class="sp"><input id="before" value="0.00 cm" class="flex-1 min-w-0 px-2 outline-none" /><button aria-label="Decrease"><svg viewBox="0 0 12 12"><path d="M1 6.500h10" stroke="#ccc"/></svg></button><button aria-label="Increase"><svg viewBox="0 0 12 12"><path d="M.5 6h11M6 .5v11" stroke="#3d3d3d" stroke-width="1.200"/></svg></button></div></div>
              <div class="flex"><label for="below" class="ic" aria-label="Below spacing"><svg viewBox="0 0 20 20"><path d="M4 3.500h12M4 5.500h12M4 7.500h12M4 15.500h12M4 17.500h12" stroke="#2b2b2b"/><path d="M6.500 9.500h7L10 12.500z" fill="#f0552b"/></svg></label><div class="sp"><input id="below" class="flex-1 min-w-0 px-2 outline-none" /><button aria-label="Decrease"><svg viewBox="0 0 12 12"><path d="M1 6.500h10" stroke="#ccc"/></svg></button><button aria-label="Increase"><svg viewBox="0 0 12 12"><path d="M.5 6h11M6 .5v11" stroke="#3d3d3d" stroke-width="1.200"/></svg></button></div></div>
              <div class="flex"><label for="after" class="ic" aria-label="After text indent"><svg viewBox="0 0 20 20"><path d="M1 5.500h8M1 7.500h8M1 9.500h8M1 11.500h8M1 13.500h8" stroke="#2b2b2b"/><path d="M16 5v5l-4-2.500z" fill="#f0552b"/></svg></label><div class="sp"><input id="after" value="0.00 cm" class="flex-1 min-w-0 px-2 outline-none" /><button aria-label="Decrease"><svg viewBox="0 0 12 12"><path d="M1 6.500h10" stroke="#ccc"/></svg></button><button aria-label="Increase"><svg viewBox="0 0 12 12"><path d="M.5 6h11M6 .5v11" stroke="#3d3d3d" stroke-width="1.200"/></svg></button></div></div>
              <div class="flex items-center pl-[21px] gap-[11px]">
                <button aria-label="Line spacing"><svg class="size-5" viewBox="0 0 20 20"><path d="M2 4.500h9M2 6.500h9M2 8.500h9M2 12.500h9M2 14.500h9M2 16.500h9" stroke="#2b2b2b"/><path d="M15.500 6v9" stroke="#f0552b"/><path d="M13 8h5l-2.500-4zM13 13h5l-2.500 4z" fill="#f0552b"/></svg></button>
                <button aria-label="Line spacing options"><svg class="size-3"><use href="#chev"/></svg></button>
              </div>
              <div class="flex"><label for="first" class="ic" aria-label="First line indent"><svg viewBox="0 0 20 20"><path d="M9 5.500h8M9 7.500h8M9 9.500h8M4 12.500h13M4 14.500h13" stroke="#2b2b2b"/><path d="M2 5v5l4-2.500z" fill="#f0552b"/></svg></label><div class="sp"><input id="first" value="0.00 cm" class="flex-1 min-w-0 px-2 outline-none" /><button aria-label="Decrease"><svg viewBox="0 0 12 12"><path d="M1 6.500h10" stroke="#ccc"/></svg></button><button aria-label="Increase"><svg viewBox="0 0 12 12"><path d="M.5 6h11M6 .5v11" stroke="#3d3d3d" stroke-width="1.200"/></svg></button></div></div>
            </div>
            <h3><svg><use href="#chevr"/></svg>Area<svg><use href="#gear"/></svg></h3>
            <h3><svg><use href="#chevr"/></svg>Line<svg><use href="#gear"/></svg></h3>
            <h3><svg><use href="#chevr"/></svg>Shadow<svg><use href="#gear"/></svg></h3>
            <h3><svg><use href="#chevr"/></svg>Position and Size<svg><use href="#gear"/></svg></h3>
            <h3><svg><use href="#chevr"/></svg>Columns<svg class="invisible"></svg></h3>
          </div>

          <!-- Tab bar -->
          <div class="w-[50px] shrink-0 pl-1 pt-[2px] flex flex-col gap-2 [&>button]:w-[36px] [&>button]:h-[34px] [&>button]:grid [&>button]:place-items-center [&_svg]:size-6">
            <button aria-label="Sidebar settings" class="mb-[3px]"><svg viewBox="0 0 24 24"><path d="M7 7.500h10M7 12h10M7 16.500h10" stroke="#3d3d3d" stroke-width="1.200"/></svg></button>
            <button aria-label="Properties" class="bg-[#d5d5d5] border border-[#c3c3c3] rounded-md"><svg viewBox="0 0 24 24"><rect x="4" y="4" width="16" height="7" rx="3.500" fill="#e95420"/><rect x="4" y="13" width="16" height="7" rx="3.500" fill="#e95420"/><circle cx="16.500" cy="7.500" r="2.500" fill="#fff"/><circle cx="7.500" cy="16.500" r="2.500" fill="#fff"/></svg></button>
            <button aria-label="Styles"><svg viewBox="0 0 24 24" fill="none"><path d="M12 14l4.500-11h1.500L21 14M14.500 10.500H20" stroke="#2b2b2b" stroke-width="2.400"/><path d="M5 12l4-5 3 .5 5 6.500-4 3.500q-3 0-5-2.500z" fill="#eee" stroke="#4d4d4d"/><path d="M1.500 21.500l5-5" stroke="#fa8b7a" stroke-width="2.800"/></svg></button>
            <button aria-label="Gallery"><svg viewBox="0 0 24 24"><rect x="2.500" y="3.500" width="16" height="12" rx="1" fill="#d95fcb" stroke="#4d4d4d"/><rect x="5.500" y="7.500" width="16" height="13" rx="1" fill="#d95fcb" stroke="#4d4d4d"/><path d="M9 18l3-5 2 2 1-1 3 4z" fill="#fff"/><circle cx="17.500" cy="11.500" r="1.200" fill="#fff"/></svg></button>
            <button aria-label="Navigator"><svg viewBox="0 0 24 24"><circle cx="12" cy="12" r="9.500" fill="#4a7ae8" stroke="#4d4d4d"/><path d="M7 17l3-7 4 4z" fill="#dfe6f5"/><path d="M17 7l-7 3 4 4z" fill="#f3dce0"/><path d="M17 7l-4 2 2 2z" fill="#e0304a"/></svg></button>
            <button aria-label="Shapes"><svg viewBox="0 0 24 24"><path d="M12 3.500l8.500 8.500-8.500 8.500L3.500 12z" fill="#fff" stroke="#4d4d4d" stroke-width="1.200"/></svg></button>
            <button aria-label="Slide transition"><svg viewBox="0 0 24 24"><use href="#board"/><path d="M17 15h7v8h-7z" fill="#fafafa"/><path d="M17 15l6 4-6 4zM22.500 15H24v8h-1.500z" fill="#f0552b"/></svg></button>
            <button aria-label="Animation"><svg viewBox="0 0 24 24" class="[--f:#b43cb4]"><use href="#film"/></svg></button>
            <button aria-label="Master slides"><svg viewBox="0 0 24 24"><rect x="2.500" y="4.500" width="19" height="13" rx="1" fill="#aee3f8" stroke="#4d4d4d"/><use href="#pencil" x="12" y="7" width="12" height="16"/></svg></button>
          </div>
        </aside>
      </div>

      <!-- STATUS BAR -->
      <footer class="h-[21px] shrink-0 border-t border-[#b5b5b5] flex items-center text-[12px] leading-4 whitespace-nowrap [&>*]:h-4 [&>*]:flex [&>*]:items-center [&>*]:border-r [&>*]:border-[#d8d8d8]">
        <span class="w-[82px] pl-[9px]">Slide 1 of 28</span>
        <span class="flex-1 pl-[9px]">7 Drawing objects selected</span>
        <span class="w-[382px] pl-[8px]">Title, Content</span>
        <span class="w-[216px] pl-[11px]">
          <svg class="w-4 h-3 mr-1" viewBox="0 0 16 12" fill="none"><path d="M6 3.500h8.500v6h-11V7" stroke="#4d4d4d"/><path d="M0 3h5M2.500.5v5" stroke="#f0552b"/></svg>0.42 / 0.42
          <svg class="w-4 h-3 ml-auto mr-1" viewBox="0 0 16 12" fill="none"><path d="M4.500 4.500h11v6h-11z" stroke="#4d4d4d"/><path d="M4 1.500h11M4 0v3M15 0v3M1.500 4v7M0 4.500h3M0 10.500h3" stroke="#f0552b"/></svg><span class="pr-[7px]">24.55 x 18.21</span></span>
        <span class="w-[22px] justify-center"><svg class="size-3" viewBox="0 0 12 12"><path d="M3.500 1h3v4H9L5 9.500 1 5h2.500z" fill="#9bd24a" stroke="#3f5a1a"/><path d="M1 11h8" stroke="#444" stroke-width="1.500"/><circle cx="10.500" cy="1.500" r="1.500" fill="#c8142f"/></svg></span>
        <span class="w-[29px]"></span>
        <span class="w-[377px] justify-center">English (USA)</span>
        <span class="w-[22px] justify-center"><svg class="size-[14px]" viewBox="0 0 14 14"><path d="M7 1v12M1 7h12" stroke="#f0552b" stroke-width="1.400"/><path d="M7 0l2.500 3h-5zM7 14l2.500-3h-5zM0 7l3-2.500v5zM14 7l-3-2.500v5z" fill="#f0552b"/></svg></span>
        <span class="w-[143px] justify-center gap-[6px]">
          <button aria-label="Zoom out"><svg class="size-[9px]" viewBox="0 0 9 9"><path d="M0 4.500h9" stroke="#444" stroke-width="2"/></svg></button>
          <input type="range" aria-label="Zoom" class="w-[97px] h-[9px] appearance-none bg-linear-to-b from-transparent from-40% via-[#888] via-40% to-transparent to-60% [&::-webkit-slider-thumb]:appearance-none [&::-webkit-slider-thumb]:size-[9px] [&::-webkit-slider-thumb]:rounded-full [&::-webkit-slider-thumb]:border [&::-webkit-slider-thumb]:border-[#666] [&::-webkit-slider-thumb]:bg-white" />
          <button aria-label="Zoom in"><svg class="size-[9px]" viewBox="0 0 9 9"><path d="M0 4.500h9M4.500 0v9" stroke="#444" stroke-width="2"/></svg></button>
        </span>
        <span class="w-[47px] pl-[8px] border-r-0!">107%</span>
      </footer>
    </main>
  </div>
</body>
</html>
